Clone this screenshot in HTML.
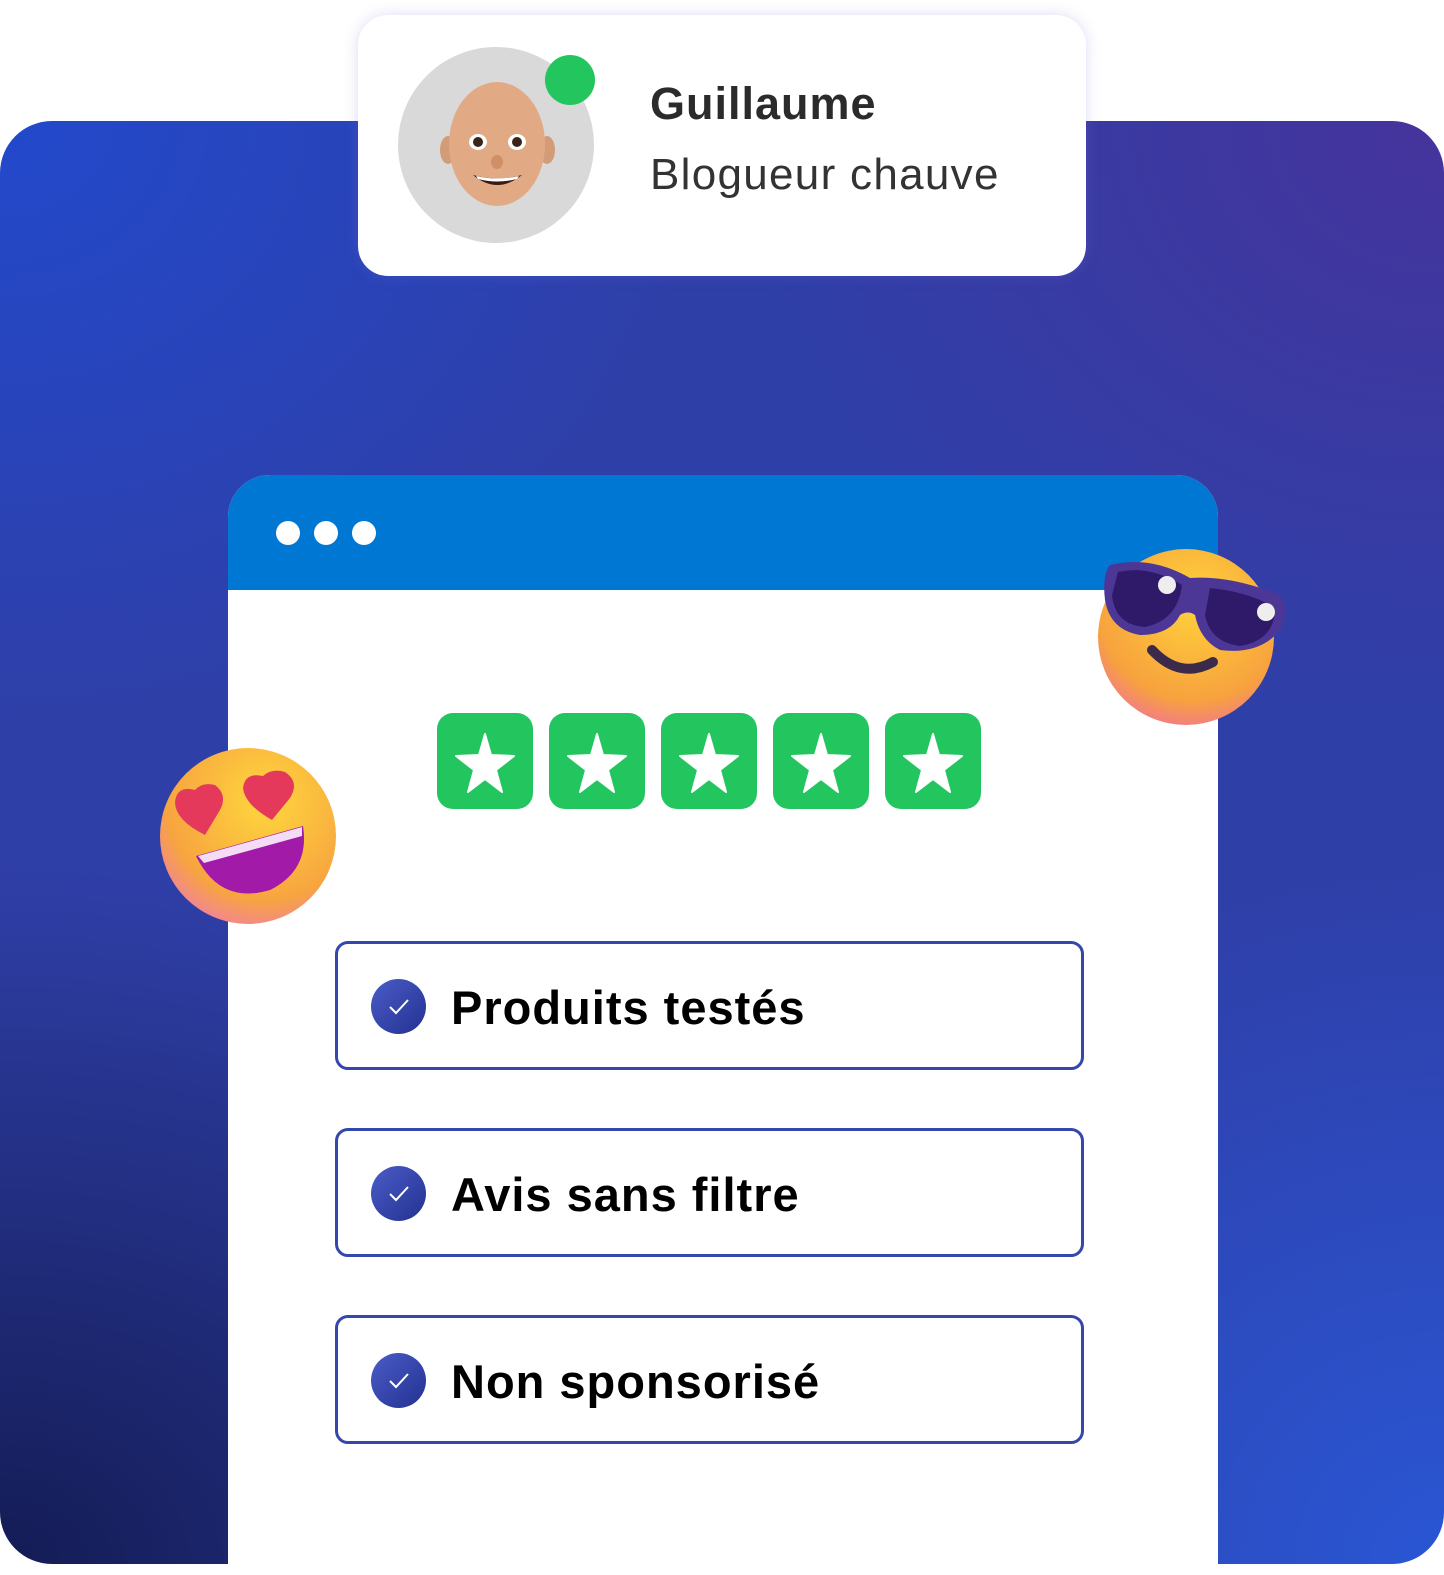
<!DOCTYPE html>
<html><head><meta charset="utf-8"><style>
*{margin:0;padding:0;box-sizing:border-box}
body{width:1444px;height:1565px;background:#fff;position:relative;overflow:hidden;font-family:"Liberation Sans",sans-serif}
.bg{position:absolute;left:0;top:121px;width:1444px;height:1443px;border-radius:52px;overflow:hidden;
background:
radial-gradient(ellipse 900px 700px at 0% 100%,#141c55 0%,rgba(20,28,85,0) 100%),
radial-gradient(ellipse 700px 700px at 100% 100%,#2a56d4 0%,rgba(42,86,212,0) 100%),
radial-gradient(ellipse 700px 600px at 100% 0%,#45349c 0%,rgba(69,52,156,0) 100%),
radial-gradient(ellipse 700px 600px at 0% 0%,#2249cc 0%,rgba(34,73,204,0) 100%),
#2f3fa8}
.card{position:absolute;left:358px;top:15px;width:728px;height:261px;background:#fff;border-radius:30px;box-shadow:0 0 14px rgba(120,120,220,.25)}
.av{position:absolute;left:398px;top:47px;width:196px;height:196px;border-radius:50%;background:#d9d9d9}
.dot{position:absolute;left:545px;top:55px;width:50px;height:50px;border-radius:50%;background:#22c55e}
.name{position:absolute;left:650px;top:78px;font-size:45px;font-weight:bold;color:#2b2b2b;letter-spacing:1px}
.sub{position:absolute;left:650px;top:150px;font-size:44px;color:#333;font-weight:normal;letter-spacing:1.3px}
.win{position:absolute;left:228px;top:475px;width:990px;height:1100px;background:#fff;border-radius:42px 42px 0 0;overflow:hidden}
.bar{height:115px;background:#0077d2}
.wd{position:absolute;top:521px;width:24px;height:24px;border-radius:50%;background:#fff}
.star{position:absolute;top:713px;width:96px;height:96px;border-radius:16px;background:#22c55e}
.box{position:absolute;left:335px;width:749px;height:129px;border:3px solid #3547ad;border-radius:13px;background:#fff}
.chk{position:absolute;left:33px;top:35px;width:55px;height:55px;border-radius:50%;background:linear-gradient(135deg,#4a5cc8,#233190)}
.box span{position:absolute;left:113px;top:36px;font-size:47px;font-weight:bold;color:#000;letter-spacing:1px}
</style></head><body>
<div class="bg"></div>
<div class="card"></div>
<div class="av"></div>
<svg style="position:absolute;left:440px;top:80px" width="115" height="130" viewBox="0 0 115 130">
<ellipse cx="8" cy="70" rx="8" ry="14" fill="#d39c78"/><ellipse cx="107" cy="70" rx="8" ry="14" fill="#d39c78"/>
<ellipse cx="57" cy="64" rx="48" ry="62" fill="#e2aa84"/>
<ellipse cx="38" cy="62" rx="9" ry="8" fill="#fff"/><ellipse cx="77" cy="62" rx="9" ry="8" fill="#fff"/>
<circle cx="38" cy="62" r="5" fill="#3a2418"/><circle cx="77" cy="62" r="5" fill="#3a2418"/>
<ellipse cx="57" cy="82" rx="6" ry="7" fill="#cf9068"/>
<path d="M33 95 Q57 115 82 95 Q57 102 33 95Z" fill="#3a1a12"/><path d="M36 96 Q57 101 79 96 L77 99 Q57 104 38 99Z" fill="#fff"/>
</svg>
<div class="dot"></div>
<div class="name">Guillaume</div>
<div class="sub">Blogueur chauve</div>
<div class="win"><div class="bar"></div></div>
<div class="wd" style="left:276px"></div><div class="wd" style="left:314px"></div><div class="wd" style="left:352px"></div>
<div class="star" style="left:437px"></div><div class="star" style="left:549px"></div><div class="star" style="left:661px"></div><div class="star" style="left:773px"></div><div class="star" style="left:885px"></div>
<svg style="position:absolute;left:437px;top:713px" width="544" height="96" viewBox="0 0 544 96">
<defs><path id="s" d="M48 21 L54 42 L77 43 L59 57 L65 79 L48 66 L31 79 L37 57 L19 43 L42 42Z" fill="#fff" stroke="#fff" stroke-width="2" stroke-linejoin="round"/></defs>
<use href="#s"/><use href="#s" x="112"/><use href="#s" x="224"/><use href="#s" x="336"/><use href="#s" x="448"/>
</svg>
<div class="box" style="top:941px"><div class="chk"></div><svg style="position:absolute;left:50px;top:54px" width="22" height="18"><path d="M2 9 L8 15 L20 2" stroke="#fff" stroke-width="2" fill="none"/></svg><span>Produits testés</span></div>
<div class="box" style="top:1128px"><div class="chk"></div><svg style="position:absolute;left:50px;top:54px" width="22" height="18"><path d="M2 9 L8 15 L20 2" stroke="#fff" stroke-width="2" fill="none"/></svg><span>Avis sans filtre</span></div>
<div class="box" style="top:1315px"><div class="chk"></div><svg style="position:absolute;left:50px;top:54px" width="22" height="18"><path d="M2 9 L8 15 L20 2" stroke="#fff" stroke-width="2" fill="none"/></svg><span>Non sponsorisé</span></div>
<svg style="position:absolute;left:1090px;top:540px" width="210" height="200" viewBox="0 0 210 200">
<defs><radialGradient id="f1" cx="0.55" cy="0.3" r="0.8"><stop offset="0" stop-color="#ffd23a"/><stop offset="0.7" stop-color="#f7a23e"/><stop offset="1" stop-color="#f06aa8"/></radialGradient></defs>
<circle cx="96" cy="97" r="88" fill="url(#f1)"/>
<path d="M20 25 Q60 15 100 38 Q140 35 190 55 Q200 70 190 90 Q170 115 130 110 Q110 100 105 75 Q98 70 90 75 Q80 95 50 95 Q20 90 15 60 Q12 35 20 25Z" fill="#4d3796"/>
<path d="M28 32 Q60 25 92 45 Q88 80 55 87 Q25 85 22 55Z" fill="#2f1a6a"/>
<path d="M120 48 Q160 52 185 68 Q185 100 150 106 Q120 102 115 75Z" fill="#2f1a6a"/>
<circle cx="77" cy="45" r="9" fill="#eee"/><circle cx="176" cy="72" r="9" fill="#eee"/>
<path d="M62 110 Q90 140 123 122" stroke="#3b2a4a" stroke-width="10" fill="none" stroke-linecap="round"/>
</svg>
<svg style="position:absolute;left:150px;top:740px" width="200" height="200" viewBox="0 0 200 200">
<defs><radialGradient id="f2" cx="0.6" cy="0.3" r="0.8"><stop offset="0" stop-color="#ffd73e"/><stop offset="0.7" stop-color="#f7a53f"/><stop offset="1" stop-color="#f07ab0"/></radialGradient></defs>
<circle cx="98" cy="96" r="88" fill="url(#f2)"/>
<path d="M55 95 Q25 80 25 62 Q27 45 45 50 Q52 42 65 45 Q78 55 70 70 Z" fill="#e5395c"/>
<path d="M122 80 Q95 65 93 48 Q95 32 113 36 Q122 28 135 32 Q150 42 140 58 Z" fill="#e5395c"/>
<path d="M46 116 L153 86 Q160 130 120 150 Q70 165 46 116Z" fill="#a21aa8"/>
<path d="M48 116 L152 87 L152 96 L54 123Z" fill="#f4dcf7"/>
</svg>
</body></html>
